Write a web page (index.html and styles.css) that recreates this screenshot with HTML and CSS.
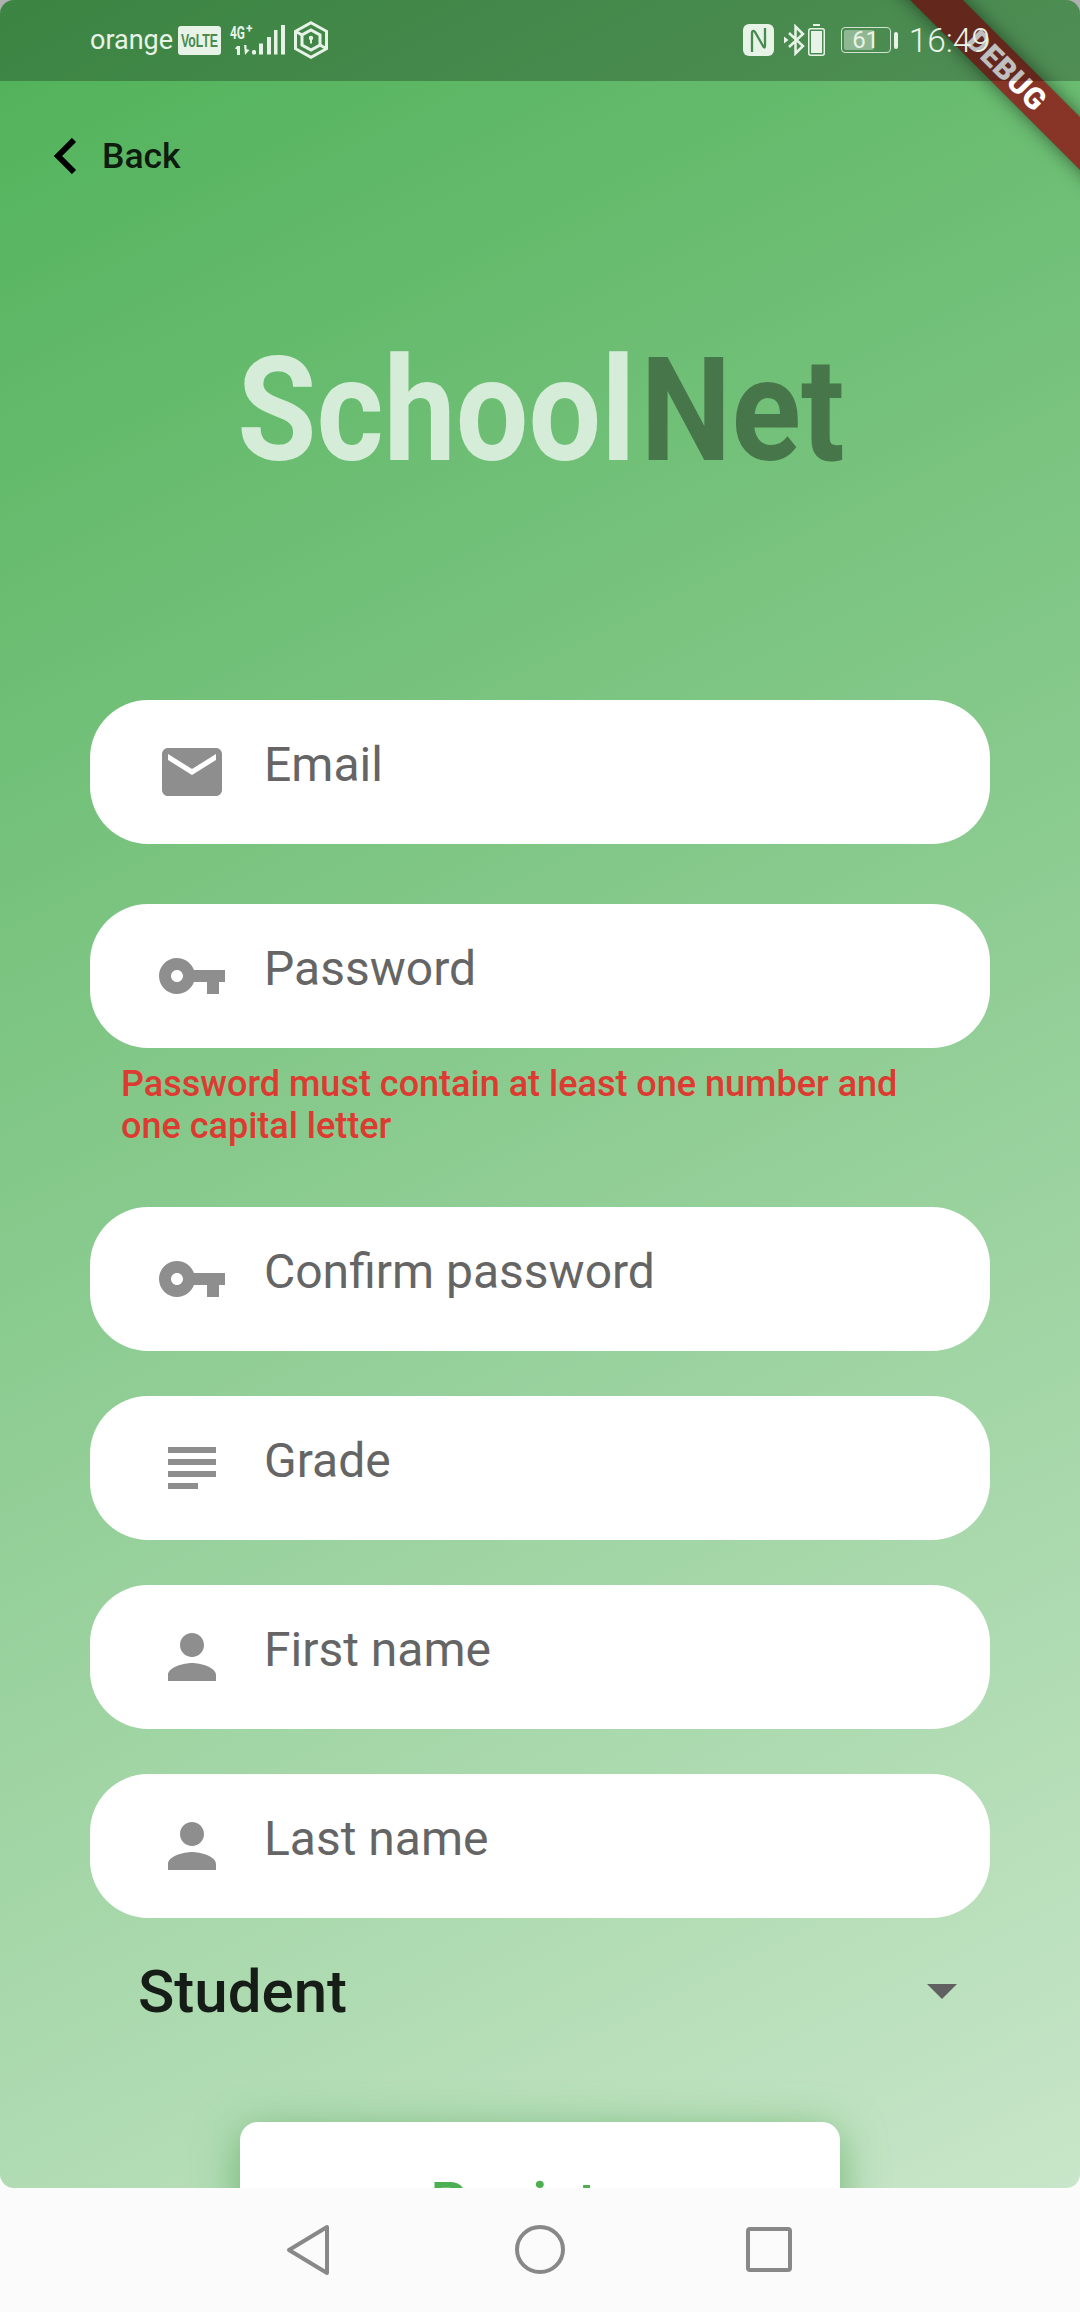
FILE: index.html
```html
<!DOCTYPE html>
<html lang="en">
<head>
<meta charset="utf-8">
<title>SchoolNet</title>
<link rel="stylesheet" href="styles.css">
</head>
<body>
<div class="screen">
  <main class="app">
    <div class="back-row">
      <svg class="chevron" viewBox="0 0 24 36" width="24" height="36"><path d="M21 2 5 18l16 16" fill="none" stroke="#000" stroke-width="6"/></svg>
      <span class="back-label">Back</span>
    </div>
    <h1 class="logo"><span class="logo-inner"><span class="logo-school">School</span><span class="logo-net">Net</span></span></h1>
    <form class="form">
      <div class="field gap-large">
        <svg class="icon" viewBox="0 0 24 24"><path d="M20 4H4c-1.100 0-1.990.9-1.990 2L2 18c0 1.100.9 2 2 2h16c1.100 0 2-.9 2-2V6c0-1.100-.9-2-2-2zm0 4l-8 5-8-5V6l8 5 8-5v2z"/></svg>
        <span class="label">Email</span>
      </div>
      <div class="field">
        <svg class="icon" viewBox="0 0 24 24"><path d="M12.650 10C11.830 7.670 9.610 6 7 6c-3.310 0-6 2.690-6 6s2.690 6 6 6c2.610 0 4.830-1.670 5.650-4H17v4h4v-4h2v-4H12.650zM7 14c-1.100 0-2-.9-2-2s.9-2 2-2 2 .9 2 2-.9 2-2 2z"/></svg>
        <span class="label">Password</span>
      </div>
      <p class="error">Password must contain at least one number and<br>one capital letter</p>
      <div class="field gap-small">
        <svg class="icon" viewBox="0 0 24 24"><path d="M12.650 10C11.830 7.670 9.610 6 7 6c-3.310 0-6 2.690-6 6s2.690 6 6 6c2.610 0 4.830-1.670 5.650-4H17v4h4v-4h2v-4H12.650zM7 14c-1.100 0-2-.9-2-2s.9-2 2-2 2 .9 2 2-.9 2-2 2z"/></svg>
        <span class="label">Confirm password</span>
      </div>
      <div class="field gap-small">
        <svg class="icon" viewBox="0 0 24 24"><path d="M14 17H4v2h10v-2zm6-8H4v2h16V9zM4 15h16v-2H4v2zM4 5v2h16V5H4z"/></svg>
        <span class="label">Grade</span>
      </div>
      <div class="field gap-small">
        <svg class="icon" viewBox="0 0 24 24"><path d="M12 12c2.210 0 4-1.790 4-4s-1.790-4-4-4-4 1.790-4 4 1.790 4 4 4zm0 2c-2.670 0-8 1.340-8 4v2h16v-2c0-2.660-5.330-4-8-4z"/></svg>
        <span class="label">First name</span>
      </div>
      <div class="field">
        <svg class="icon" viewBox="0 0 24 24"><path d="M12 12c2.210 0 4-1.790 4-4s-1.790-4-4-4-4 1.790-4 4 1.790 4 4 4zm0 2c-2.670 0-8 1.340-8 4v2h16v-2c0-2.660-5.330-4-8-4z"/></svg>
        <span class="label">Last name</span>
      </div>
      <div class="select">
        <span class="select-value">Student</span>
        <span class="caret"></span>
      </div>
      <div class="button">Register</div>
    </form>

    <div class="banner"><span>DEBUG</span></div>
    <div class="status-scrim"></div>
    <div class="status">
      <div class="status-left">
        <span class="carrier">orange</span>
        <svg class="volte" viewBox="0 0 43 29" width="43" height="29">
          <rect width="43" height="29" rx="3" fill="#e8f3e8"/>
          <text x="21.500" y="21" text-anchor="middle" textLength="37" lengthAdjust="spacingAndGlyphs" class="volte-text">VoLTE</text>
        </svg>
        <svg class="signal" viewBox="0 0 57 32" width="57" height="32">
          <text x="2" y="13.500" textLength="15" lengthAdjust="spacingAndGlyphs" class="net-text">4G</text>
          <text x="18" y="8" class="plus-text">+</text>
          <path d="M9 21h3v9H9zM7 23.500 9 21v3.500zM16 20h2.500v4l3 1-4.500 5z" fill="#e8f3e8"/>
          <rect x="24" y="25" width="4" height="4.500" rx="1.500" fill="#e8f3e8"/>
          <rect x="31" y="18.500" width="4" height="11" fill="#e8f3e8"/>
          <rect x="39" y="12" width="4" height="17.500" fill="#e8f3e8"/>
          <rect x="46" y="5" width="3.500" height="24.500" fill="#e8f3e8"/>
          <rect x="53" y="0" width="4" height="29.500" fill="#e8f3e8"/>
        </svg>
        <svg class="hex" viewBox="0 0 34 38" width="34" height="38" fill="none" stroke="#e8f3e8" stroke-width="3">
          <path d="M17 1.700 32.500 10.300v17.400L17 36.300 1.500 27.700V10.300z"/>
          <path d="M17 9 26 14v10l-9 5-9-5V14z"/>
          <path d="M1.500 10.300 8 14M32.500 27.700 26 24"/>
          <circle cx="17" cy="17" r="2.200" fill="#e8f3e8" stroke="none"/>
          <path d="M17 18v4.500" stroke-width="2"/>
        </svg>
      </div>
      <div class="status-right">
        <svg class="nfc" viewBox="0 0 31 32" width="31" height="32">
          <rect width="31" height="32" rx="6" fill="#e8f3e8"/>
          <path d="M9 28V9c0-2 1-3 3-1l8 14c1 2 2 2 2 0V4" fill="none" stroke="#478a50" stroke-width="2.300"/>
        </svg>
        <svg class="bt" viewBox="0 0 21 32" width="21" height="32">
          <path d="M5 9 19 22 11.500 29.500V2.500L19 10 5 23" fill="none" stroke="#e8f3e8" stroke-width="2.500"/>
          <path d="M0 12.500 4.500 16 0 19.500z" fill="#e8f3e8"/>
        </svg>
        <svg class="mini-battery" viewBox="0 0 17 32" width="17" height="32">
          <rect x="5" y="0" width="7" height="2" fill="#e8f3e8"/>
          <rect x=".75" y="4.750" width="15.500" height="26.500" rx="2" fill="none" stroke="#e8f3e8" stroke-width="1.500"/>
          <rect x="3" y="7" width="11" height="22" fill="#e8f3e8"/>
        </svg>
        <div class="battery">
          <div class="battery-body">
            <div class="battery-fill"></div>
            <span class="battery-text">61</span>
          </div>
          <div class="battery-nub"></div>
        </div>
        <span class="time">16:49</span>
      </div>
    </div>
  </main>
  <nav class="nav">
    <svg viewBox="0 0 60 60" width="60" height="60" class="nav-icon"><path d="M10 30 48 7v46z"/></svg>
    <svg viewBox="0 0 60 60" width="60" height="60" class="nav-icon"><ellipse cx="30" cy="29.500" rx="23" ry="22.500"/></svg>
    <svg viewBox="0 0 60 60" width="60" height="60" class="nav-icon"><rect x="7" y="9" width="42" height="41" rx="2"/></svg>
  </nav>
</div>
</body>
</html>
```

FILE: styles.css
```css
* { box-sizing: border-box; }
html, body { margin: 0; padding: 0; }
body { width: 1080px; height: 2312px; overflow: hidden; font-family: Roboto, "Liberation Sans", sans-serif; }

.screen { width: 1080px; height: 2312px; display: flex; flex-direction: column; background: linear-gradient(#b0b0b0 0 40px, #fbfbfb 40px); }

.app {
  position: relative;
  height: 2188px;
  flex: none;
  overflow: hidden;
  border-radius: 14px;
  background: linear-gradient(153.7deg, #4fb158, #c8e6c9);
  padding-top: 131px;
}

.back-row { display: flex; align-items: center; height: 50px; padding-left: 53px; }
.chevron { flex: none; }
.back-label { margin-left: 25px; font-size: 35.500px; font-weight: 500; color: rgba(0, 0, 0, .87); }

.logo { margin: 155px 0 0; height: 148px; display: flex; justify-content: center; font-size: 145px; line-height: 148px; font-weight: 700; }
.logo-inner { display: block; white-space: nowrap; transform: translateX(1px) scaleX(.888); }
.logo-school { color: #d5edd8; }
.logo-net { color: #47764a; margin-left: 6px; }

.form { margin-top: 216px; padding: 0 90px; display: flex; flex-direction: column; }

.field {
  height: 144px;
  display: flex;
  align-items: center;
  padding-left: 66px;
  background: #fff;
  border-radius: 58px;
  flex: none;
}
.gap-large { margin-bottom: 60px; }
.gap-small { margin-bottom: 45px; }
.icon { width: 72px; height: 72px; fill: #8e8e8e; flex: none; }
.label { margin-left: 36px; margin-bottom: 15px; font-size: 48px; line-height: 54px; color: #656565; }

.error { margin: 15px 0 60px 31px; font-size: 36px; line-height: 42px; font-weight: 500; color: #dd3b31; }

.select { margin-top: 23px; height: 100px; display: flex; align-items: center; justify-content: space-between; padding: 0 33px 0 48px; }
.select-value { padding-top: 1px; font-size: 60px; font-weight: 500; color: rgba(0, 0, 0, .87); }
.caret { width: 0; height: 0; border-left: 15px solid transparent; border-right: 15px solid transparent; border-top: 15px solid #616161; }

.button {
  margin: 81px auto 0;
  width: 600px;
  height: 162px;
  flex: none;
  display: flex;
  align-items: center;
  justify-content: center;
  background: #fff;
  border-radius: 18px;
  box-shadow: 0 10px 44px rgba(60, 150, 65, .6);
  font-size: 59px;
  font-weight: 500;
  color: #4caf50;
}

.banner {
  position: absolute;
  left: 797px;
  top: 51.500px;
  width: 420px;
  height: 37px;
  display: flex;
  align-items: center;
  justify-content: center;
  background: linear-gradient(rgba(183, 28, 28, .63), rgba(183, 28, 28, .63)), rgba(0, 0, 0, .5);
  box-shadow: 0 0 18px rgba(0, 0, 0, .5);
  transform: rotate(45deg);
  color: #fff;
  font-size: 30px;
  font-weight: 900;
  letter-spacing: .5px;
}

.status-scrim { position: absolute; left: 0; top: 0; width: 100%; height: 81px; background: rgba(0, 0, 0, .25); }

.status {
  position: absolute;
  left: 0;
  top: 0;
  width: 100%;
  height: 81px;
  display: flex;
  justify-content: space-between;
  padding: 21px 90px 0 90px;
  color: #e8f3e8;
}
.status-left, .status-right { display: flex; align-items: flex-start; }
.carrier { font-size: 27px; line-height: 32px; margin: 3px 5px 0 0; }
.volte { margin-top: 5px; flex: none; }
.volte-text { font-family: "Liberation Sans", sans-serif; font-size: 19px; font-weight: 700; fill: #488a50; }
.signal { margin: 4px 0 0 7px; flex: none; }
.net-text { font-size: 18px; font-weight: 700; fill: #e8f3e8; }
.plus-text { font-size: 12px; font-weight: 700; fill: #e8f3e8; }
.hex { margin-left: 9px; flex: none; }

.nfc { margin-top: 3px; }
.bt { margin: 3px 0 0 10px; }
.mini-battery { margin: 3px 0 0 3px; }
.battery { margin: 6px 0 0 16px; display: flex; align-items: center; height: 26px; }
.battery-body { position: relative; width: 50px; height: 26px; border: 1.500px solid #cfe3d0; border-radius: 4px; display: flex; align-items: center; justify-content: center; }
.battery-fill { position: absolute; left: 2px; top: 2px; bottom: 2px; width: 30px; background: rgba(255, 255, 255, .38); border-radius: 2px; }
.battery-text { position: relative; font-size: 24px; line-height: 24px; }
.battery-nub { margin-left: 3px; width: 4px; height: 17px; background: #e8f3e8; border-radius: 2px; }
.time { margin-left: 11px; font-size: 33.500px; line-height: 40px; font-weight: 300; }

.nav { flex: 1; display: flex; align-items: center; justify-content: center; gap: 171px; }
.nav-icon { fill: none; stroke: #888; stroke-width: 4; stroke-linejoin: round; }
```
